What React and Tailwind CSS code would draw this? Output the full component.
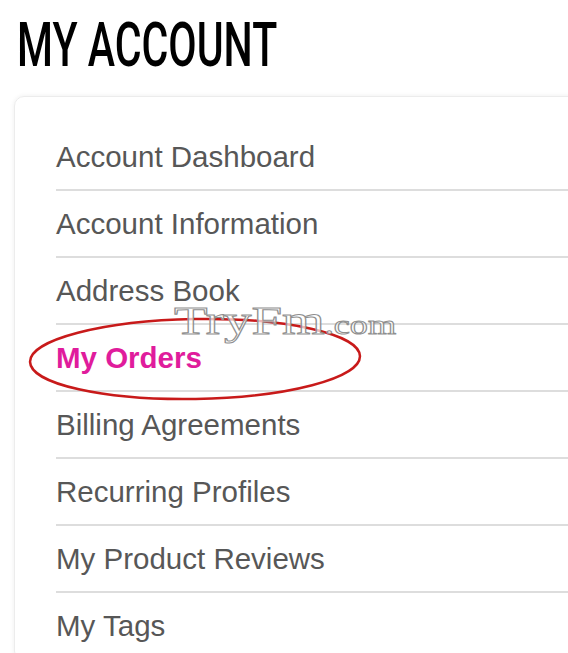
const links = [
  "Account Dashboard",
  "Account Information",
  "Address Book",
  "My Orders",
  "Billing Agreements",
  "Recurring Profiles",
  "My Product Reviews",
  "My Tags",
];

const App = () => {
  return (
    <div className="relative w-[568px] h-[653px] overflow-hidden bg-white font-['Liberation_Sans',Arial,sans-serif]">
      <div className="pl-[17px] pt-[14px] h-[76px]">
        <h1 className="inline-block origin-left scale-x-[0.663] font-['Roboto',sans-serif] text-[62px] leading-none font-medium text-black whitespace-nowrap">
          MY ACCOUNT
        </h1>
      </div>

      <div className="ml-[14px] mt-[20px] w-[640px] border border-[#ececec] rounded-[10px] shadow-[0_0_5px_rgba(0,0,0,0.07)] pt-[27px] pl-[41px]">
        <ul>
          {links.map((label) => (
            <li
              key={label}
              className="h-[67px] border-b-2 border-[#dddddd] last:border-b-0"
            >
              <a
                href="#"
                className={
                  label === "My Orders"
                    ? "block leading-[65px] text-[29.5px] font-bold text-[#e01c9c]"
                    : "block leading-[65px] text-[29.5px] text-[#575757]"
                }
              >
                {label}
              </a>
            </li>
          ))}
        </ul>
      </div>

      {/* annotation ellipse */}
      <svg
        className="absolute left-0 top-0 pointer-events-none"
        width="568"
        height="653"
      >
        <ellipse
          cx="195"
          cy="359"
          rx="165"
          ry="40"
          fill="none"
          stroke="#c81a1a"
          strokeWidth="2.5"
          transform="rotate(-1 195 359)"
        />
      </svg>

      {/* watermark */}
      <div className="absolute left-[174px] top-[300px] origin-left scale-x-[1.34] whitespace-nowrap font-['Liberation_Serif',serif] text-[rgba(255,255,255,0.7)] [-webkit-text-stroke:1px_#8f8f8f]">
        <span className="text-[41px] leading-none">TryFm</span>
        <span className="text-[27px] leading-none">.com</span>
      </div>
    </div>
  );
};

export default App;
